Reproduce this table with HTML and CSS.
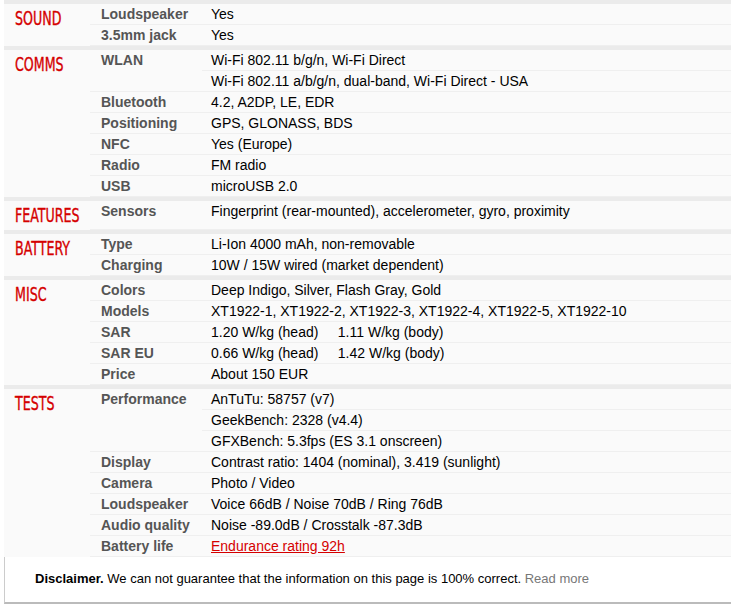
FILE: index.html
```html
<!DOCTYPE html>
<html>
<head>
<meta charset="utf-8">
<link rel="stylesheet" href="styles.css">
</head>
<body>
<div class="specs">
  <table class="sec">
    <colgroup><col class="c1"><col class="c2"><col></colgroup>
    <tr><th rowspan="2"><span class="hd">Sound</span></th><td class="ttl">Loudspeaker</td><td class="nfo">Yes</td></tr>
    <tr><td class="ttl">3.5mm jack</td><td class="nfo">Yes</td></tr>
  </table>
  <table class="sec">
    <colgroup><col class="c1"><col class="c2"><col></colgroup>
    <tr><th rowspan="8"><span class="hd">Comms</span></th><td class="ttl" rowspan="2">WLAN</td><td class="nfo">Wi-Fi 802.11 b/g/n, Wi-Fi Direct</td></tr>
    <tr><td class="nfo">Wi-Fi 802.11 a/b/g/n, dual-band, Wi-Fi Direct - USA</td></tr>
    <tr><td class="ttl">Bluetooth</td><td class="nfo">4.2, A2DP, LE, EDR</td></tr>
    <tr><td class="ttl">Positioning</td><td class="nfo">GPS, GLONASS, BDS</td></tr>
    <tr><td class="ttl">NFC</td><td class="nfo">Yes (Europe)</td></tr>
    <tr><td class="ttl">Radio</td><td class="nfo">FM radio</td></tr>
    <tr><td class="ttl">USB</td><td class="nfo">microUSB 2.0</td></tr>
  </table>
  <table class="sec">
    <colgroup><col class="c1"><col class="c2"><col></colgroup>
    <tr><th><span class="hd">Features</span></th><td class="ttl">Sensors</td><td class="nfo">Fingerprint (rear-mounted), accelerometer, gyro, proximity</td></tr>
  </table>
  <table class="sec">
    <colgroup><col class="c1"><col class="c2"><col></colgroup>
    <tr><th rowspan="2"><span class="hd">Battery</span></th><td class="ttl">Type</td><td class="nfo">Li-Ion 4000 mAh, non-removable</td></tr>
    <tr><td class="ttl">Charging</td><td class="nfo">10W / 15W wired (market dependent)</td></tr>
  </table>
  <table class="sec">
    <colgroup><col class="c1"><col class="c2"><col></colgroup>
    <tr><th rowspan="5"><span class="hd">Misc</span></th><td class="ttl">Colors</td><td class="nfo">Deep Indigo, Silver, Flash Gray, Gold</td></tr>
    <tr><td class="ttl">Models</td><td class="nfo">XT1922-1, XT1922-2, XT1922-3, XT1922-4, XT1922-5, XT1922-10</td></tr>
    <tr><td class="ttl">SAR</td><td class="nfo">1.20 W/kg (head) &nbsp; &nbsp; 1.11 W/kg (body) &nbsp; &nbsp;</td></tr>
    <tr><td class="ttl">SAR EU</td><td class="nfo">0.66 W/kg (head) &nbsp; &nbsp; 1.42 W/kg (body) &nbsp; &nbsp;</td></tr>
    <tr><td class="ttl">Price</td><td class="nfo">About 150 EUR</td></tr>
  </table>
  <table class="sec">
    <colgroup><col class="c1"><col class="c2"><col></colgroup>
    <tr><th rowspan="10"><span class="hd">Tests</span></th><td class="ttl" rowspan="3">Performance</td><td class="nfo">AnTuTu: 58757 (v7)</td></tr>
    <tr><td class="nfo">GeekBench: 2328 (v4.4)</td></tr>
    <tr><td class="nfo">GFXBench: 5.3fps (ES 3.1 onscreen)</td></tr>
    <tr><td class="ttl">Display</td><td class="nfo">Contrast ratio: 1404 (nominal), 3.419 (sunlight)</td></tr>
    <tr><td class="ttl">Camera</td><td class="nfo">Photo / Video</td></tr>
    <tr><td class="ttl">Loudspeaker</td><td class="nfo">Voice 66dB / Noise 70dB / Ring 76dB</td></tr>
    <tr><td class="ttl">Audio quality</td><td class="nfo">Noise -89.0dB / Crosstalk -87.3dB</td></tr>
    <tr><td class="ttl">Battery life</td><td class="nfo"><a class="lnk" href="#">Endurance rating 92h</a></td></tr>
  </table>
  <p class="disclaimer"><b>Disclaimer.</b> We can not guarantee that the information on this page is 100% correct. <a class="more" href="#">Read more</a></p>
</div>
</body>
</html>
```

FILE: styles.css
```css
html, body {
  margin: 0;
  padding: 0;
  background: #fff;
}
.specs {
  padding-left: 4px;
  font-family: "Liberation Sans", Arial, sans-serif;
  font-size: 14px;
}
.sec {
  width: 100%;
  table-layout: fixed;
  border-collapse: collapse;
  border-spacing: 0;
  background: #fafafa;
  border-top: 4px solid #ebebeb;
}
.c1 { width: 86px; }
.c2 { width: 112px; }
.sec th {
  padding: 4px 0 4px 11px;
  text-align: left;
  vertical-align: top;
  line-height: 20px;
  height: 20px;
  font-weight: normal;
  white-space: nowrap;
  overflow: visible;
}
.hd {
  display: inline-block;
  vertical-align: top;
  line-height: 20px;
  font-family: "Liberation Sans Narrow", "DejaVu Sans Condensed", sans-serif;
  font-size: 19px;
  color: #d50000;
  text-transform: uppercase;
  transform: scaleX(0.74);
  transform-origin: left center;
  -webkit-text-stroke: 0.35px #d50000;
}
.sec td {
  vertical-align: top;
  line-height: 20px;
  border-bottom: 1px solid #efefef;
  padding: 0;
  white-space: nowrap;
}
.ttl {
  padding-left: 11px !important;
  font-weight: bold;
  color: #555;
}
.nfo {
  padding-left: 9px !important;
  color: #000;
}
.lnk {
  color: #d50000;
  text-decoration: underline;
}
.disclaimer {
  margin: 0;
  background: #fff;
  border-left: 1px solid #ccc;
  border-bottom: 2px solid #bbb;
  padding: 12px 0 13px 30px;
  font-size: 13px;
  line-height: 20px;
  color: #000;
}
.more {
  color: #777;
  text-decoration: none;
}
```
